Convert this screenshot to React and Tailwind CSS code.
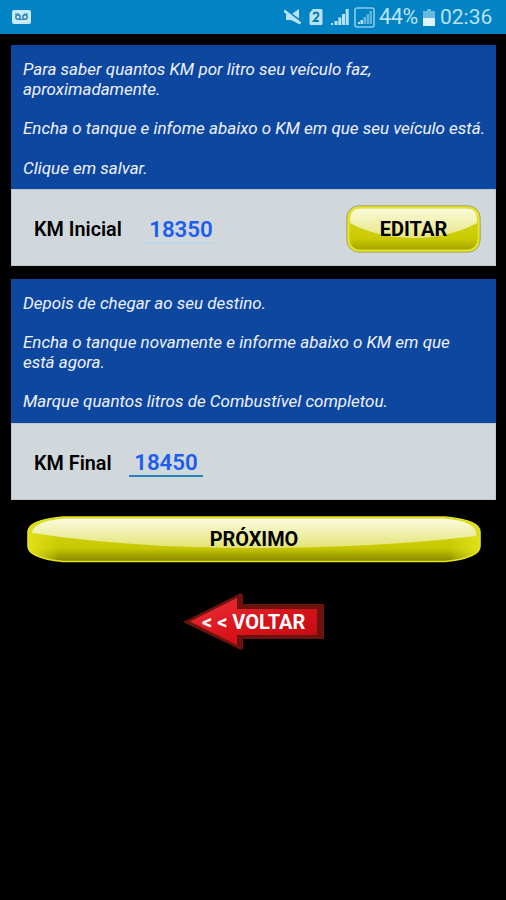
import React from 'react';

const StatusBar = () => (
    <header className="flex h-[34px] items-center bg-[#0284c4] pl-3 pr-[13px] text-[#b9e2f5]">
        <svg className="mt-[-1px] shrink-0" width="19" height="14" viewBox="0 0 19 14" fill="none">
            <rect width="19" height="14" rx="2" fill="#c8eafa" />
            <circle cx="6" cy="7" r="2.2" stroke="#2a83b5" strokeWidth="1.4" />
            <circle cx="13" cy="7" r="2.2" stroke="#2a83b5" strokeWidth="1.4" />
            <path d="M3 4h4M12 4h4M7 9.5h5" stroke="#2a83b5" />
        </svg>

        <div className="ml-auto flex items-center">
            {/* Muted speaker */}
            <svg width="18" height="18" viewBox="0 0 18 18" fill="none">
                <path d="M2 6.5h5L15 1v15l-8-4H2z" fill="currentColor" />
                <path d="M1 1.5l15 11" stroke="#0284c4" strokeWidth="2" />
                <path d="M0 2.500l16.500 13" stroke="currentColor" strokeWidth="2.600" />
            </svg>
            {/* SIM 2 */}
            <svg className="ml-[7px]" width="14" height="18" viewBox="0 0 14 18" fill="none">
                <path d="M4 1h8q1.500 0 1.500 1.500v13q0 1.500-1.500 1.500H2q-1.500 0-1.500-1.500V5z" fill="currentColor" />
                <path d="M4.500 6.500q.3-2 2.500-2t2.500 2q0 1.300-1.500 2.800L4.800 13h5" stroke="#0878b0" strokeWidth="1.800" />
            </svg>
            {/* Signal */}
            <svg className="ml-2" width="18" height="18" viewBox="0 0 18 18" fill="currentColor">
                <path d="M0 15h2v2H0zM3.500 13h3v4h-3zM7.300 9.500h3V17h-3zM11 6h3v11h-3zM14.700 1h3v16h-3z" />
            </svg>
            <svg className="ml-[5px]" width="21" height="21" viewBox="0 0 21 21" fill="none">
                <rect x="1" y="1" width="19" height="19" rx="2" stroke="#8cc9e8" strokeWidth="1.600" />
                <path d="M4 15h2v2H4zM6.500 13h2.500v4H6.500z" fill="currentColor" />
                <path d="M9.500 10H12v7H9.500zM12.500 7H15v10h-2.500zM15.500 4H18v13h-2.500z" fill="#5db3dd" />
            </svg>
            <span className="ml-[4px] w-[42px] whitespace-nowrap text-[21.500px] leading-6 tracking-[-0.3px]">44%</span>
            <svg className="ml-[2px]" width="12" height="17" viewBox="0 0 12 17">
                <path d="M4 0h4v2h4v7H0V2h4z" fill="#68b9df" />
                <path d="M0 9h12v8H0z" fill="#e0f4fd" />
            </svg>
            <span className="ml-[5px] w-[53px] whitespace-nowrap text-[21px] leading-6">02:36</span>
        </div>
    </header>
);

const Panel = ({ lines, children }) => (
    <section className="ml-[11px] mr-[10px] flex flex-col">
        <div className="h-[144px] bg-[#0e479f] pl-3 pt-[15.4px] text-[16.98px] italic leading-[19.7px] text-[#eef2ff]">
            {lines.map((line, idx) => (
                <p key={idx} className="h-[19.7px] whitespace-nowrap">{line}</p>
            ))}
        </div>
        <div className="flex h-[77px] items-center border border-[#bdc9cd] bg-[#d0d8db] pl-[22px] pr-[14px]">
            {children}
        </div>
    </section>
);

const EditButton = () => (
    <button className="ml-auto mt-[2px] grid h-[48px] w-[135px] place-items-center text-[20px] font-bold text-black">
        <svg className="col-start-1 row-start-1" width="135" height="48" viewBox="0 0 135 48">
            <defs>
                <linearGradient id="editBody" x2="0" y2="1">
                    <stop offset="0" stopColor="#d8d828" />
                    <stop offset="0.75" stopColor="#caca00" />
                    <stop offset="1" stopColor="#a4a400" />
                </linearGradient>
                <linearGradient id="editGloss" x2="0" y2="1">
                    <stop offset="0" stopColor="#fbfbda" />
                    <stop offset="1" stopColor="#e5e582" />
                </linearGradient>
            </defs>
            <rect x="0.8" y="0.8" width="133.4" height="46.4" rx="12" fill="#e4e420" stroke="#a0a080" />
            <rect x="3.5" y="3" width="128" height="41.500" rx="10" fill="url(#editBody)" />
            <path d="M4 18v-4Q4 3.500 14 3.500h107q10 0 10 10.500v4Q103 33 67.500 33T4 18z" fill="url(#editGloss)" />
        </svg>
        <span className="col-start-1 row-start-1">EDITAR</span>
    </button>
);

const NextButton = () => (
    <button className="ml-[27px] mt-[16px] grid h-[47px] w-[454px] place-items-center text-[19.9px] font-bold text-black">
        <svg className="col-start-1 row-start-1" width="454" height="47" viewBox="0 0 454 47">
            <defs>
                <linearGradient id="nextBody" x2="0" y2="1">
                    <stop offset="0" stopColor="#d8d820" />
                    <stop offset="0.7" stopColor="#c8c800" />
                    <stop offset="1" stopColor="#858500" />
                </linearGradient>
                <linearGradient id="nextGloss" x2="0" y2="1">
                    <stop offset="0" stopColor="#fbfbe0" />
                    <stop offset="1" stopColor="#e3e375" />
                </linearGradient>
                <linearGradient id="nextEdge">
                    <stop offset="0" stopColor="#e0e018" />
                    <stop offset="0.07" stopColor="#e0e018" stopOpacity="0" />
                    <stop offset="0.93" stopColor="#e0e018" stopOpacity="0" />
                    <stop offset="1" stopColor="#e0e018" />
                </linearGradient>
            </defs>
            <path d="M36 1h382Q453 4 453 16v14q0 12-35 15.500H36Q1 42 1 30V16Q1 4 36 1z" fill="url(#nextBody)" />
            <path d="M36 1h382Q453 4 453 16v14q0 12-35 15.500H36Q1 42 1 30V16Q1 4 36 1z" fill="url(#nextEdge)" stroke="#e3e31e" strokeWidth="1.600" />
            <path d="M5 16Q7 5 38 2.500h378q31 2.500 33 13.500v4Q350 32 227 32T5 17z" fill="url(#nextGloss)" />
        </svg>
        <span className="col-start-1 row-start-1 pt-px">PRÓXIMO</span>
    </button>
);

const BackButton = () => (
    <button className="ml-[183px] mt-[30px] grid h-[59px] w-[142px] items-center justify-items-start text-[20px] font-bold text-white">
        <svg className="col-start-1 row-start-1" width="142" height="59" viewBox="0 0 142 59">
            <defs>
                <linearGradient id="backFill" x2="1" y2="1">
                    <stop offset="0" stopColor="#ef3038" />
                    <stop offset="0.5" stopColor="#d9151c" />
                    <stop offset="1" stopColor="#bc0b12" />
                </linearGradient>
            </defs>
            <path d="M0 29L56 1q4-2 4 2v8h81v35H60v8q0 4-4 2z" fill="#6d130e" />
            <path d="M7 28.500L54 5v11h80v26H54v10z" fill="url(#backFill)" />
        </svg>
        <span className="col-start-1 row-start-1 whitespace-pre pl-[19px]">{'< < VOLTAR'}</span>
    </button>
);

const App = () => (
    <main className="flex h-[900px] w-[506px] flex-col overflow-hidden bg-black font-['Roboto',sans-serif]">
        <StatusBar />
        <div className="h-[11px] shrink-0"></div>
        <Panel
            lines={[
                'Para saber quantos KM por litro seu veículo faz,',
                'aproximadamente.',
                '',
                'Encha o tanque e infome abaixo o KM em que seu veículo está.',
                '',
                'Clique em salvar.',
            ]}
        >
            <label className="w-[110px] pt-[5px] text-[19.8px] font-semibold text-black">KM Inicial</label>
            <span className="mt-[4px] w-[73px] border-b-2 border-[#bfd7e6] pl-px text-center text-[22.3px] font-semibold leading-[26px] text-[#1c5cf0]">18350</span>
            <EditButton />
        </Panel>
        <div className="h-[12.500px] shrink-0"></div>
        <Panel
            lines={[
                'Depois de chegar ao seu destino.',
                '',
                'Encha o tanque novamente e informe abaixo o KM em que',
                'está agora.',
                '',
                'Marque quantos litros de Combustível completou.',
            ]}
        >
            <label className="w-[95px] pt-[5px] text-[19.8px] font-semibold text-black">KM Final</label>
            <span className="mt-[4px] w-[74px] border-b-2 border-[#2386bd] text-center text-[22.3px] font-semibold leading-[26px] text-[#1c5cf0]">18450</span>
        </Panel>
        <NextButton />
        <BackButton />
    </main>
);

export default App;
